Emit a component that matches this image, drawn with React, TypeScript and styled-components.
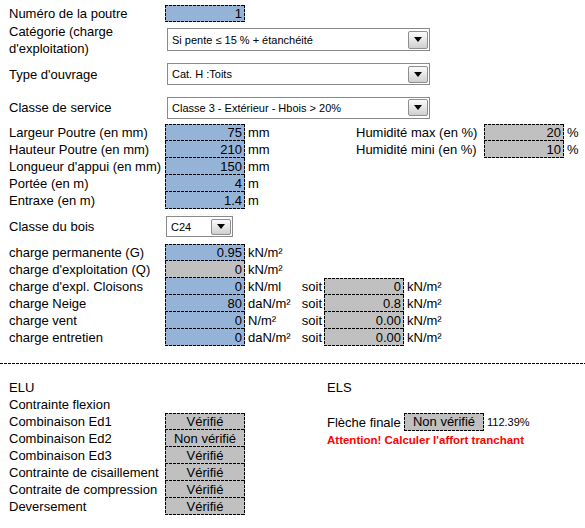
import React from "react";
import styled, { createGlobalStyle } from "styled-components";

const Global = createGlobalStyle`
  html, body { margin: 0; padding: 0; background: #ffffff; }
  body {
    font-family: "Liberation Sans", Arial, sans-serif;
    font-size: 13px;
    color: #000000;
  }
`;

const H = "repeating-linear-gradient(90deg, #000 0 3px, transparent 3px 4px)";
const V = "repeating-linear-gradient(180deg, #000 0 3px, transparent 3px 4px)";

function dashed(top: boolean, bottom: boolean, fill: string) {
  const layers: string[] = [];
  if (top) layers.push(`${H} left top / 100% 1px no-repeat`);
  if (bottom) layers.push(`${H} left bottom / 100% 1px no-repeat`);
  layers.push(`${V} left top / 1px 100% no-repeat`);
  layers.push(`${V} right top / 1px 100% no-repeat`);
  return `background: ${layers.join(", ")}, ${fill};`;
}

const TONES = { blue: "#95b3d7", gray: "#c0c0c0" } as const;
type Tone = keyof typeof TONES;

const Sheet = styled.div`
  width: 585px;
  padding-top: 5px;
`;

const Section = styled.div`
  padding-left: 9px;
`;

const Row = styled.div<{ $h?: number }>`
  display: flex;
  align-items: center;
  height: ${(p) => p.$h ?? 17}px;
`;

const Label = styled.div<{ $w?: number }>`
  width: ${(p) => p.$w ?? 156}px;
  flex: none;
  white-space: nowrap;
  line-height: 17px;
`;

const Cell = styled.div<{ $tone: Tone; $top?: boolean; $bottom?: boolean; $center?: boolean; $h?: number }>`
  width: 80px;
  height: ${(p) => p.$h ?? 17}px;
  flex: none;
  box-sizing: border-box;
  padding: 0 3px;
  line-height: ${(p) => p.$h ?? 17}px;
  text-align: ${(p) => (p.$center ? "center" : "right")};
  white-space: nowrap;
  ${(p) => dashed(!!p.$top, !!p.$bottom, TONES[p.$tone])}
`;

const Unit = styled.div<{ $w?: number }>`
  width: ${(p) => (p.$w ? `${p.$w}px` : "auto")};
  flex: none;
  box-sizing: border-box;
  padding-left: 3px;
  white-space: nowrap;
`;

const Soit = styled.div`
  width: 23px;
  flex: none;
  box-sizing: border-box;
  padding-right: 2px;
  text-align: right;
`;

const Select = styled.div<{ $w: number; $h: number; $ml?: number }>`
  width: ${(p) => p.$w}px;
  height: ${(p) => p.$h}px;
  margin-left: ${(p) => p.$ml ?? 2}px;
  box-sizing: border-box;
  border: 1px solid #8a8a8a;
  background: #ffffff;
  display: flex;
  align-items: center;
  font-size: 11px;
  padding-left: 4px;
  padding-right: 1px;
`;

const SelectText = styled.span`
  flex: 1;
  white-space: nowrap;
  overflow: hidden;
`;

const ArrowButton = styled.div`
  width: 20px;
  height: calc(100% - 3px);
  box-sizing: border-box;
  border: 1px solid #8e8e8e;
  border-radius: 2px;
  background: linear-gradient(#fbfbfb, #e4e4e4 55%, #cfcfcf);
  display: flex;
  align-items: center;
  justify-content: center;
`;

const Separator = styled.div`
  height: 1px;
  margin: 17px 0 15px;
  background: ${H};
`;

const Bottom = styled.div`
  display: grid;
  grid-template-columns: 318px 1fr;
  padding-left: 9px;
`;

const Column = styled.div`
  display: flex;
  flex-direction: column;
`;

const Small = styled.span`
  font-size: 11px;
  padding-left: 3px;
  white-space: nowrap;
`;

const Warning = styled.div`
  color: #ff0000;
  font-weight: bold;
  font-size: 11.5px;
  line-height: 17px;
  white-space: nowrap;
  padding-top: 1px;
`;

function Dropdown({ text, w, h, ml }: { text: string; w: number; h: number; ml?: number }) {
  return (
    <Select $w={w} $h={h} $ml={ml}>
      <SelectText>{text}</SelectText>
      <ArrowButton>
        <svg width="8" height="5" viewBox="0 0 8 5">
          <polygon points="0,0 8,0 4,5" fill="#000" />
        </svg>
      </ArrowButton>
    </Select>
  );
}

const dims = [
  { label: "Largeur Poutre (en mm)", v: "75", u: "mm", hum: { label: "Humidité max (en %)", v: "20" } },
  { label: "Hauteur Poutre (en mm)", v: "210", u: "mm", hum: { label: "Humidité mini (en %)", v: "10" } },
  { label: "Longueur d'appui (en mm)", v: "150", u: "mm" },
  { label: "Portée (en m)", v: "4", u: "m" },
  { label: "Entraxe (en m)", v: "1.4", u: "m" },
];

const loads: { label: string; v: string; u: string; tone: Tone; soit?: { v: string; u: string } }[] = [
  { label: "charge permanente (G)", v: "0.95", u: "kN/m²", tone: "blue" },
  { label: "charge d'exploitation (Q)", v: "0", u: "kN/m²", tone: "gray" },
  { label: "charge d'expl. Cloisons", v: "0", u: "kN/ml", tone: "blue", soit: { v: "0", u: "kN/m²" } },
  { label: "charge Neige", v: "80", u: "daN/m²", tone: "blue", soit: { v: "0.8", u: "kN/m²" } },
  { label: "charge vent", v: "0", u: "N/m²", tone: "blue", soit: { v: "0.00", u: "kN/m²" } },
  { label: "charge entretien", v: "0", u: "daN/m²", tone: "blue", soit: { v: "0.00", u: "kN/m²" } },
];

const checks = [
  { label: "Combinaison Ed1", v: "Vérifié" },
  { label: "Combinaison Ed2", v: "Non vérifié" },
  { label: "Combinaison Ed3", v: "Vérifié" },
  { label: "Contrainte de cisaillement", v: "Vérifié" },
  { label: "Contraite de compression", v: "Vérifié" },
  { label: "Deversement", v: "Vérifié" },
];

export default function App() {
  return (
    <>
      <Global />
      <Sheet>
        <Section>
          <Row>
            <Label>Numéro de la poutre</Label>
            <Cell $tone="blue" $top $bottom>1</Cell>
          </Row>
          <Row $h={35}>
            <Label>
              Catégorie (charge
              <br />
              d'exploitation)
            </Label>
            <Dropdown text="Si pente ≤ 15 % + étanchéité" w={263} h={23} />
          </Row>
          <Row $h={34}>
            <Label>Type d'ouvrage</Label>
            <Dropdown text="Cat. H :Toits" w={263} h={22} />
          </Row>
          <Row $h={33}>
            <Label>Classe de service</Label>
            <Dropdown text="Classe 3 - Extérieur - Hbois > 20%" w={263} h={22} />
          </Row>
          {dims.map((d, i) => (
            <Row key={d.label}>
              <Label>{d.label}</Label>
              <Cell $tone="blue" $top={i === 0} $bottom>
                {d.v}
              </Cell>
              <Unit $w={d.hum ? 111 : undefined}>{d.u}</Unit>
              {d.hum && (
                <>
                  <Label $w={128}>{d.hum.label}</Label>
                  <Cell $tone="gray" $top={i === 0} $bottom>
                    {d.hum.v}
                  </Cell>
                  <Unit>%</Unit>
                </>
              )}
            </Row>
          ))}
          <Row $h={35}>
            <Label>Classe du bois</Label>
            <Dropdown text="C24" w={67} h={21} ml={1} />
          </Row>
          {loads.map((l, i) => (
            <Row key={l.label}>
              <Label>{l.label}</Label>
              <Cell $tone={l.tone} $top={i === 0} $bottom>
                {l.v}
              </Cell>
              <Unit $w={l.soit ? 56 : undefined}>{l.u}</Unit>
              {l.soit && (
                <>
                  <Soit>soit</Soit>
                  <Cell $tone="gray" $top={i === 2} $bottom>
                    {l.soit.v}
                  </Cell>
                  <Unit>{l.soit.u}</Unit>
                </>
              )}
            </Row>
          ))}
        </Section>
        <Separator />
        <Bottom>
          <Column>
            <Row>
              <Label>ELU</Label>
            </Row>
            <Row>
              <Label>Contrainte flexion</Label>
            </Row>
            {checks.map((c, i) => (
              <Row key={c.label}>
                <Label>{c.label}</Label>
                <Cell $tone="gray" $top={i === 0} $bottom $center>
                  {c.v}
                </Cell>
              </Row>
            ))}
          </Column>
          <Column>
            <Row>
              <Label>ELS</Label>
            </Row>
            <Row />
            <Row $h={18}>
              <Label $w={77}>Flèche finale</Label>
              <Cell $tone="gray" $top $bottom $center $h={18}>
                Non vérifié
              </Cell>
              <Small>112.39%</Small>
            </Row>
            <Warning>Attention! Calculer l'affort tranchant</Warning>
          </Column>
        </Bottom>
      </Sheet>
    </>
  );
}
